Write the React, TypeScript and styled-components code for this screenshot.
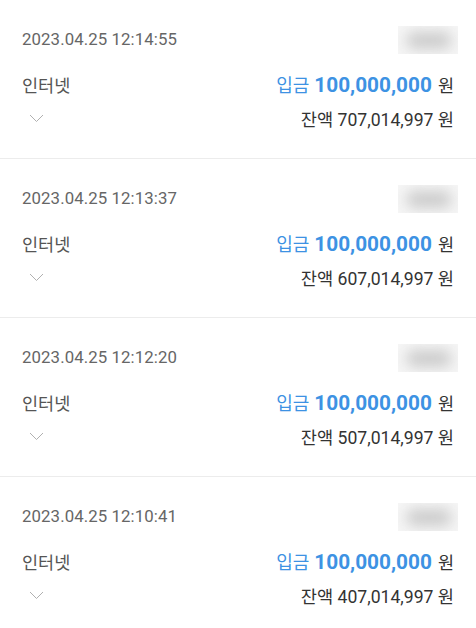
import React from 'react';
import styled, { createGlobalStyle } from 'styled-components';

const GlobalStyle = createGlobalStyle`
  html, body {
    margin: 0;
    padding: 0;
    background: #ffffff;
    font-family: Roboto, "Noto Sans CJK KR", sans-serif;
  }
`;

const List = styled.div`
  width: 100%;
`;

const Row = styled.div`
  padding: 25px 22px 23px 22px;
  border-bottom: 1px solid #ececec;
`;

const Header = styled.div`
  display: flex;
  align-items: center;
  justify-content: space-between;
  height: 30px;
  margin-bottom: 12px;
`;

const DateText = styled.span`
  font-size: 16.8px;
  color: #666666;
  letter-spacing: 0.1px;
  padding-bottom: 3px;
`;

const Masked = styled.div`
  position: relative;
  width: 60px;
  height: 28px;
  margin-right: -4px;
  background: #f6f6f6;
  overflow: hidden;

  &::after {
    content: '';
    position: absolute;
    left: 8px;
    right: 6px;
    top: 6px;
    bottom: 5px;
    background: #cbcbcb;
    border-radius: 12px;
    filter: blur(7px);
  }
`;

const Line = styled.div`
  display: flex;
  align-items: center;
  justify-content: space-between;
  height: 34px;
`;

const Memo = styled.span`
  font-size: 17.5px;
  color: #555555;
`;

const Amount = styled.span`
  display: flex;
  align-items: baseline;
  gap: 6px;
`;

const Kind = styled.span`
  font-size: 18px;
  color: #3d92e3;
`;

const Number = styled.span`
  font-size: 20.8px;
  font-weight: 700;
  color: #3d92e3;
  margin-left: -1px;
`;

const Won = styled.span`
  font-size: 17.5px;
  color: #333333;
`;

const Balance = styled.span`
  font-size: 17.6px;
  color: #333333;
`;

const Toggle = styled.button`
  border: none;
  background: none;
  padding: 0;
  margin-left: 7px;
  display: flex;
  align-items: center;
  cursor: pointer;
`;

const items = [
  { time: '2023.04.25 12:14:55', balance: '707,014,997' },
  { time: '2023.04.25 12:13:37', balance: '607,014,997' },
  { time: '2023.04.25 12:12:20', balance: '507,014,997' },
  { time: '2023.04.25 12:10:41', balance: '407,014,997' },
];

const Chevron = () => (
  <svg width="15" height="9" viewBox="0 0 15 9" fill="none">
    <path d="M1 1l6.5 6.5L14 1" stroke="#b0b0b0" strokeWidth="1" />
  </svg>
);

export default function App() {
  return (
    <>
      <GlobalStyle />
      <List>
        {items.map((item) => (
          <Row key={item.time}>
            <Header>
              <DateText>{item.time}</DateText>
              <Masked />
            </Header>
            <Line>
              <Memo>인터넷</Memo>
              <Amount>
                <Kind>입금</Kind>
                <Number>100,000,000</Number>
                <Won>원</Won>
              </Amount>
            </Line>
            <Line>
              <Toggle aria-label="펼치기">
                <Chevron />
              </Toggle>
              <Balance>
                잔액 {item.balance} 원
              </Balance>
            </Line>
          </Row>
        ))}
      </List>
    </>
  );
}
